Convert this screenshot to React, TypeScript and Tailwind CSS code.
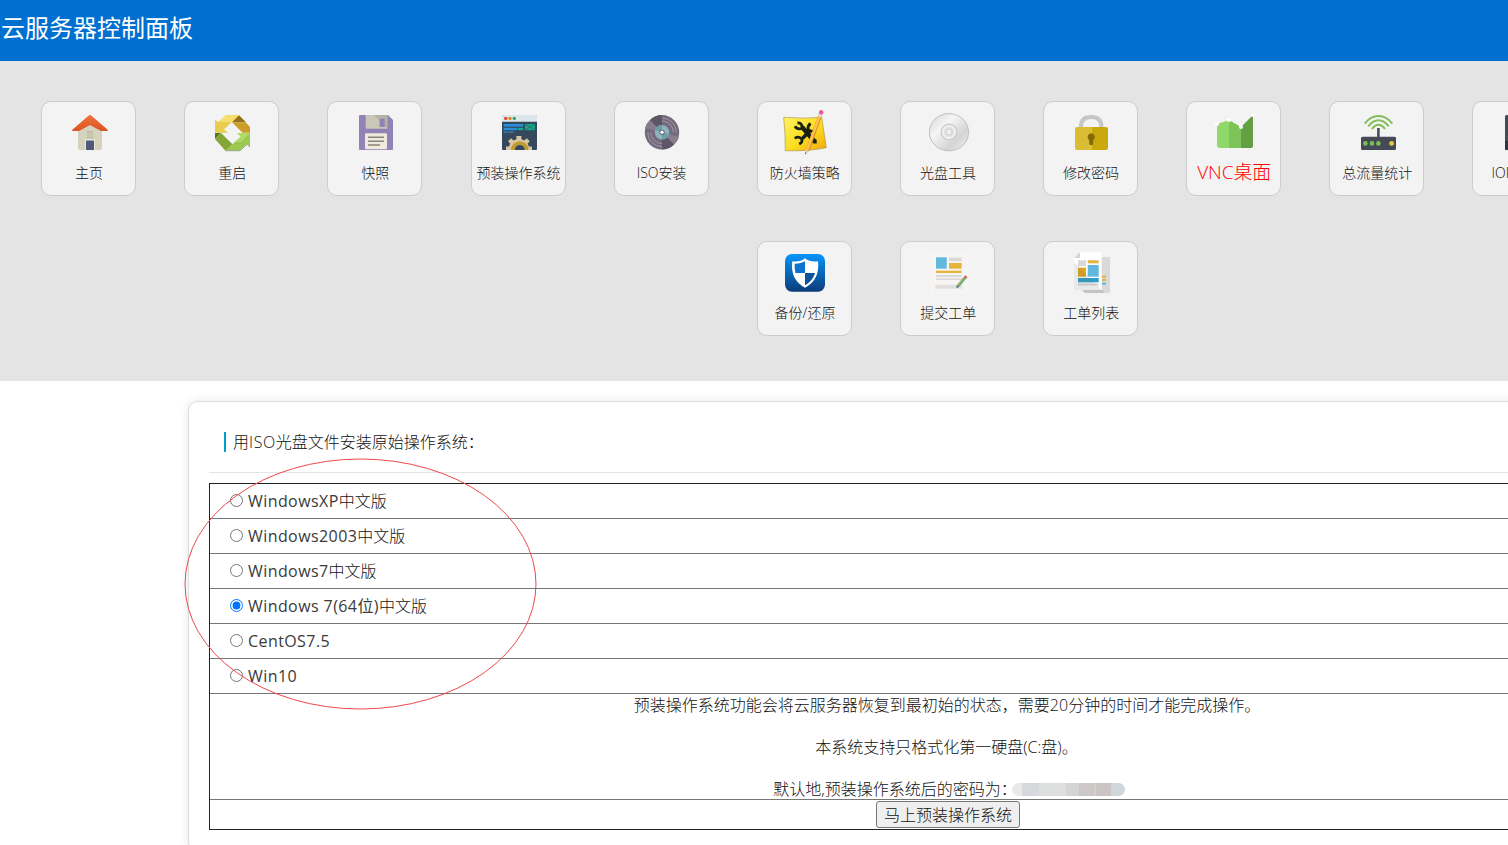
import React from 'react';

const HomeIcon = () => (
  <>
    <path d="M11 19 L23 9 L35 19 V38 Q35 40 33 40 H13 Q11 40 11 38 Z" fill="#d5d2bd" />
    <path d="M20 21.5h6M19 28h8" stroke="#bcb9a4" strokeWidth="1" />
    <rect x="20" y="22" width="6" height="5.5" fill="#c8c5b0" />
    <rect x="18" y="29" width="10" height="11" fill="#ece9da" />
    <rect x="19" y="30.5" width="8" height="9.5" fill="#4e5a78" />
    <path d="M5 20 L21.8 5.4 Q23 4.5 24.2 5.4 L41 20 Q41 21 40 21 H34 L23 15 L12 21 H6 Q5 21 5 20 Z" fill="url(#roof)" />
  </>
);

const RestartIcon = () => (
  <>
    <path d="M5 22.7V9.5L8.3 12.3 15.7 5.3H29L14 19.6 18.3 22.7Z" fill="#e9cd50" />
    <path d="M15.7 5.3H29L22 12H8.6Z" fill="#f6de68" />
    <path d="M29 5.3L36 12.3H22Z" fill="#977119" />
    <path d="M22 12.3H35.5L40 17V22.7H32.5Z" fill="#cb9c28" />
    <path d="M5 23H11L5 29Z" fill="#557a1d" />
    <path d="M5 29L11 23 22.5 34.3 15.7 41Z" fill="#83a637" />
    <path d="M40 23V36.5L37 33.7 30 40.3H15.7L31 26.5 27 23Z" fill="#9cc751" />
    <path d="M40 23L31 32H25L31 26.5 27 23Z" fill="#b0da66" />
    <path d="M15.7 40.7H30L37 34.3 40 37" stroke="#829267" strokeWidth=".8" fill="none" />
  </>
);

const SaveIcon = () => (
  <>
    <path d="M7 5H35L40 10V39Q40 40 39 40H7Q6 40 6 39V6Q6 5 7 5Z" fill="#9183b5" />
    <path d="M12.7 5H34.3V18.7H14Q12.7 18.7 12.7 17.4Z" fill="#c9c8b8" />
    <path d="M21 5H34.3V18.7Z" fill="#b5b3a2" />
    <path d="M26.5 9l5.2-.8V17h-5.2Z" fill="#9183b5" />
    <rect x="12" y="23.3" width="22" height="16" rx="1" fill="#eeeadd" />
    <path d="M15 27.3h16M15 31.3h16M15 35h12" stroke="#898477" strokeWidth="1.5" />
  </>
);

const SystemIcon = () => (
  <>
    <rect x="5" y="5" width="35" height="35" rx="1" fill="#34495e" />
    <path d="M6 5h33q1 0 1 1v5.7H5V6q0-1 1-1Z" fill="#dbe7ea" />
    <circle cx="8.7" cy="8.4" r="1.7" fill="#e0453b" />
    <circle cx="13" cy="8.4" r="1.7" fill="#df831f" />
    <circle cx="17.3" cy="8.4" r="1.7" fill="#2ba669" />
    <path d="M6.7 15.3h19.6" stroke="#288fdb" strokeWidth="2.6" />
    <path d="M6.7 19h13.6" stroke="#288fdb" strokeWidth="2.4" />
    <path d="M28 14h10v6.2H28Z" fill="#18a689" />
    <path d="M21 19h5.3" stroke="#18a689" strokeWidth="2.4" />
    <path d="M28 14l10 6M38 14l-10 6" stroke="#226b68" strokeWidth=".8" />
    <path d="M6.7 22.1h4.6M12 22.1h4.8" stroke="#3776a1" strokeWidth="1.6" />
    <path d="M9 40V36.4h3l1.2-2.8-2.2-2.3 3.1-3 2.3 2.2 3-1.3V26h5v3.2l3 1.3 2.3-2.2 3.1 3-2.2 2.3 1.2 2.8h3.1V40Z" fill="#d8c7a0" />
    <path d="M14 40a8.8 8.8 0 0 1 17.6 0h-3.8a5 5 0 0 0-10 0Z" fill="#c19b32" />
    <path d="M17.8 40a5 5 0 0 1 10 0Z" fill="#34495e" />
  </>
);

const DiscIcon = () => (
  <>
    <circle cx="22" cy="22.3" r="17.2" fill="#756a7b" />
    <path d="M22 22.3L5 18A17.2 17.2 0 0 1 10 10ZM22 22.3L34 34.6A17.2 17.2 0 0 0 39 27Z" fill="#877d8d" />
    <path d="M22 22.3V5.1A17.2 17.2 0 0 0 10 10ZM22 22.3V39.5A17.2 17.2 0 0 0 34 34.6Z" fill="#5e5566" />
    <path d="M22 8a14.3 14.3 0 0 1 14.3 14.3M22 11a11.3 11.3 0 0 1 11.3 11.3M7.7 22.3A14.3 14.3 0 0 0 22 36.6M10.7 22.3A11.3 11.3 0 0 0 22 33.6" stroke="#aaa1ad" strokeWidth=".8" fill="none" />
    <circle cx="22" cy="22.3" r="7.2" fill="#8bb4bb" />
    <path d="M22 22.3L15 20A7.2 7.2 0 0 1 22 15.1ZM22 22.3L29 24A7.2 7.2 0 0 1 22 29.5Z" fill="#6f9ca5" />
    <circle cx="22" cy="22.3" r="2.5" fill="#5d5566" />
    <circle cx="22" cy="22.3" r="1.7" fill="#fff" />
  </>
);

const FirewallIcon = () => (
  <>
    <path d="M.7 7.3Q20 9 38.7 7.3L43.3 37.7Q24 41.5 2.3 40.7 2.5 24 .7 7.3Z" fill="url(#note)" stroke="#aa9950" strokeWidth=".7" />
    <g stroke="#172014" fill="none">
      <path d="M19 17L31.5 31.5" strokeWidth="4.4" />
      <path d="M19.5 28.5L27 20.5" strokeWidth="3.6" />
      <path d="M14.5 13Q19.5 12.3 19 18.5 14 19.8 12 16.3" strokeWidth="2.8" />
      <path d="M11.8 28.5Q14.8 25.6 18.5 28.8 20.3 32 16.2 34" strokeWidth="2.8" />
      <path d="M27.6 13.5Q24.2 16 25.2 19.5 27.8 22.4 31 20.8" strokeWidth="2.8" />
      <path d="M31.8 29.5L32 33.5" strokeWidth="3.6" />
    </g>
    <path d="M38 3L24.5 40.5" stroke="#d98f25" strokeWidth="3.8" />
    <path d="M37.6 3L24 40.5" stroke="#ffc14c" strokeWidth="2.6" />
    <path d="M22.4 44L22.4 39.5 26 41Z" fill="#e6c698" />
    <path d="M22.2 44.5l.1-2 1.2.5Z" fill="#333" />
    <path d="M37 6.5l1-3" stroke="#d8dce0" strokeWidth="4.4" />
    <circle cx="38.2" cy="2.2" r="2.2" fill="#ef55a0" />
  </>
);

const CdIcon = () => (
  <>
    <ellipse cx="23" cy="22.2" rx="19.6" ry="18.6" fill="url(#cd)" stroke="#b9b9b9" strokeWidth=".9" />
    <circle cx="23" cy="22" r="8" fill="#e4e4e4" stroke="#bdbdbd" strokeWidth=".8" />
    <circle cx="23" cy="22" r="6" fill="none" stroke="#f8f8f8" strokeWidth="1" />
    <circle cx="23" cy="22" r="3.2" fill="#eee" stroke="#c3c3c3" strokeWidth=".8" />
  </>
);

const LockIcon = () => (
  <>
    <path d="M12 19V16.5Q12 7 22.2 7T32.4 16.5V19" fill="none" stroke="#c6c6c6" strokeWidth="4" />
    <path d="M8 17H22.5V40H8Q6 40 6 38V19Q6 17 8 17Z" fill="#d8bd35" />
    <path d="M22.5 17H37Q39 17 39 19V38Q39 40 37 40H22.5Z" fill="#c9a90d" />
    <path d="M22.2 23.2a4 4 0 0 1 2 7.2V33.2a2 2 0 0 1-4 0V30.4a4 4 0 0 1 2-7.2Z" fill="#826b06" />
  </>
);

const ChartIcon = () => (
  <>
    <path d="M5 14L17 10V38H8Q5 38 5 35Z" fill="#91d86a" />
    <path d="M17 10L29 17V38H17Z" fill="#7cc358" />
    <path d="M29 17L41 5V36Q41 38 38 38H29Z" fill="#64a043" />
    <circle cx="5" cy="14" r="2" fill="#fff" />
    <circle cx="17" cy="10" r="2" fill="#fff" />
    <circle cx="29" cy="17" r="2" fill="#fff" />
    <circle cx="41" cy="5" r="2" fill="#fff" />
  </>
);

const RouterIcon = () => (
  <>
    <path d="M9.7 13.6Q15.5 6 23.5 6T37.3 13.6M13.3 16.4Q18 10.3 23.5 10.3T33.7 16.4M17 19Q20 14.8 23.5 14.8T30 19" fill="none" stroke="#82bd56" strokeWidth="1.9" />
    <path d="M23.4 18v9" stroke="#474c59" strokeWidth="2.6" />
    <rect x="6" y="26.7" width="35" height="13.3" rx="1.5" fill="#454a57" />
    <circle cx="10.4" cy="33.4" r="2.3" fill="#7dbd55" />
    <circle cx="16.9" cy="33.4" r="2.3" fill="#7dbd55" />
    <circle cx="23.4" cy="33.4" r="2.3" fill="#7dbd55" />
    <circle cx="36.6" cy="33.4" r="2.4" fill="#eec541" />
  </>
);

const ServerIcon = () => (
  <>
    <rect x="7" y="5" width="32" height="35" rx="1.5" fill="#454a57" />
    <path d="M7 31h32v7.5q0 1.5-1.5 1.5h-29Q7 40 7 38.5Z" fill="#2d323e" />
    <circle cx="23" cy="18" r="8" fill="#d8dce0" />
  </>
);

const ShieldIcon = () => (
  <>
    <rect x="2" y="4" width="40" height="37.7" rx="7" fill="url(#shieldbg)" />
    <path d="M22 8.3Q27 12.3 35 11.3 37 30 22 37.7 7 30 9.3 11.3 17 12.3 22 8.3Z" fill="#fff" />
    <path d="M22 11.2V23H12.5Q11.2 18.6 11.7 13.6 17.5 14 22 11.2Z" fill="#0b72cf" />
    <path d="M22 23H32Q29.8 31 22 35.2Z" fill="#0c529d" />
  </>
);

const TicketIcon = () => (
  <>
    <rect x="4" y="2" width="38" height="42" fill="#f6f5f4" />
    <rect x="10" y="7.3" width="10.7" height="11.4" fill="#60b9dc" />
    <rect x="23" y="7.7" width="12.7" height="3.4" fill="#d9d8d6" />
    <rect x="23" y="13" width="12.7" height="5.7" fill="#e8b33d" />
    <rect x="10" y="20.7" width="25.7" height="2.3" fill="#e8b33d" />
    <path d="M10 26h25.7M10 29.2h25.7" stroke="#dad9d7" strokeWidth="1.8" />
    <rect x="9.3" y="34.7" width="27" height="4" fill="#e2e0de" />
    <path d="M38.7 28L32 36" stroke="#68ad80" strokeWidth="3" />
    <path d="M38.2 27.3L31.2 35.4" stroke="#e1b94a" strokeWidth="1" />
    <path d="M40.3 26.3L38.8 28" stroke="#d95951" strokeWidth="3" />
    <path d="M30.3 38.2L30.8 35 33.2 37Z" fill="#586890" />
  </>
);

const TicketListIcon = () => (
  <>
    <path d="M13 7H41V43H16L13 40Z" fill="#d9d9d9" />
    <path d="M13 40H33L36 43H16Z" fill="#c3c3c3" />
    <path d="M33 26.7h4M33 30h4" stroke="#e8b33d" strokeWidth="2" />
    <path d="M33 33.7h4" stroke="#60b9dc" strokeWidth="2" />
    <path d="M11 2.3H32.7V40H5V8Z" fill="#fff" />
    <path d="M5 8L11 2.3V8Z" fill="#d4d4d4" />
    <rect x="9" y="10.3" width="8" height="6" fill="#d9d9d9" />
    <rect x="18.7" y="10.3" width="11" height="3" fill="#e8b33d" />
    <rect x="9" y="17.7" width="8" height="9" fill="#dda51c" />
    <rect x="18.7" y="15" width="11" height="11.7" fill="#60b9dc" />
    <rect x="9" y="28" width="20.7" height="4.3" fill="#2a9ec8" />
    <path d="M9 34.5h20.7" stroke="#d9d9d9" strokeWidth="2" />
    <path d="M5 12L32.7 40H5Z" fill="#777" opacity=".16" />
  </>
);

type Tile = { label: React.ReactNode; icon: () => React.JSX.Element; big?: boolean };

const firstRow: Tile[] = [
  { label: '主页', icon: HomeIcon },
  { label: '重启', icon: RestartIcon },
  { label: '快照', icon: SaveIcon },
  { label: '预装操作系统', icon: SystemIcon },
  { label: 'ISO安装', icon: DiscIcon },
  { label: '防火墙策略', icon: FirewallIcon },
  { label: '光盘工具', icon: CdIcon },
  { label: '修改密码', icon: LockIcon },
  { label: 'VNC桌面', icon: ChartIcon, big: true },
  { label: '总流量统计', icon: RouterIcon },
  { label: 'IOPS统计', icon: ServerIcon },
];

const secondRow: Tile[] = [
  { label: '备份/还原', icon: ShieldIcon },
  { label: '提交工单', icon: TicketIcon },
  { label: '工单列表', icon: TicketListIcon },
];

function TileButton({ label, icon: Icon, big }: Tile) {
  return (
    <div className="w-[143.15px] shrink-0">
      <a className="flex h-[95px] w-[95px] flex-col items-center rounded-[10px] border border-[#ccc] bg-[#f3f3f3] pt-2 pl-[3px]">
        <svg className="h-[46px] w-[46px] shrink-0" viewBox="0 0 46 46"><Icon /></svg>
        <span className={big
          ? 'mt-1 mr-0.5 text-[18.9px] leading-6 whitespace-nowrap text-[#f00]'
          : 'mt-[5px] mr-0.5 text-sm leading-6 whitespace-nowrap text-[#111]'}>{label}</span>
      </a>
    </div>
  );
}

const systems = [
  { latin: 'WindowsXP', rest: '中文版' },
  { latin: 'Windows2003', rest: '中文版' },
  { latin: 'Windows7', rest: '中文版' },
  { latin: 'Windows 7(64位)', rest: '中文版', checked: true },
  { latin: 'CentOS7.5', rest: '' },
  { latin: 'Win10', rest: '' },
];

export default function App() {
  return (
    <div className="relative h-[845px] w-full overflow-hidden bg-white font-['Open_Sans','Noto_Sans_CJK_SC',sans-serif] text-base text-[#111]">
      <svg className="absolute h-0 w-0">
        <defs>
          <linearGradient id="roof" x1="0" y1="0" x2="0" y2="1"><stop offset="0" stopColor="#f2703c" /><stop offset="1" stopColor="#d95524" /></linearGradient>
          <linearGradient id="note" x1="0" y1="0" x2="1" y2="1"><stop offset="0" stopColor="#fff35c" /><stop offset=".55" stopColor="#fbdc20" /><stop offset="1" stopColor="#f2a50c" /></linearGradient>
          <linearGradient id="cd" x1="0" y1="0" x2="1" y2="1"><stop offset="0" stopColor="#d6d6d6" /><stop offset=".35" stopColor="#f5f5f5" /><stop offset=".7" stopColor="#d4d4d4" /><stop offset="1" stopColor="#f3f3f3" /></linearGradient>
          <linearGradient id="shieldbg" x1="0" y1="0" x2="0" y2="1"><stop offset="0" stopColor="#0694fb" /><stop offset="1" stopColor="#0c3c78" /></linearGradient>
        </defs>
      </svg>

      <header className="h-[61px] bg-[#0070d0] pt-[9px] pl-px">
        <h1 className="font-['Noto_Sans_CJK_SC',sans-serif] text-2xl leading-9 font-normal text-white">云服务器控制面板</h1>
      </header>

      <nav className="h-80 overflow-hidden bg-[#e4e4e4] pt-10 font-light">
        <div className="flex h-[140px] pl-[41.08px]">
          {firstRow.map((t, i) => <TileButton key={i} {...t} />)}
        </div>
        <div className="flex pl-[757px]">
          {secondRow.map((t, i) => <TileButton key={i} {...t} />)}
        </div>
      </nav>

      <main className="mt-5 ml-[188px] h-[450px] w-[1520px] rounded-[10px] border border-[#ddd] bg-white px-5 shadow-[0_0_10px_rgba(0,0,0,0.1)]">
        <div className="flex h-[71px] items-center border-b border-[#e5e5e5] pt-2.5 pl-[15px]">
          <h2 className="flex h-5 items-center border-l-2 border-[#00a0c6] pl-[7px] text-base font-light"><span>用<span className="tracking-[0.6px]">ISO</span>光盘文件安装原始操作系统：</span></h2>
        </div>
        <form className="mt-2.5 w-[1478px] border border-[#222]">
          {systems.map((s) => (
            <label key={s.latin} className="flex h-[35px] items-center border-b border-[#777] pl-5">
              <input type="radio" name="os" defaultChecked={s.checked} className="m-0 mb-0.5 h-[13px] w-[13px]" />
              <span className="ml-[5px] leading-6 whitespace-pre"><span className="tracking-[0.42px] text-[#3a3a3a]">{s.latin}</span><span className="font-light">{s.rest}</span></span>
            </label>
          ))}
          <div className="flex h-[106px] flex-col items-center border-b border-[#777] pt-px leading-[21px] font-light">
            <p className="mr-0.5">预装操作系统功能会将云服务器恢复到最初始的状态，需要20分钟的时间才能完成操作。</p>
            <p className="mt-[21px] mr-[3px]">本系统支持只格式化第一硬盘(C:盘)。</p>
            <p className="mt-[21px] ml-0.5 flex items-center">
              <span>默认地,预装操作系统后的密码为：</span>
              <span className="-ml-[5px] flex h-[13px] w-[113px] overflow-hidden rounded-full">
                <i className="w-2.5 bg-[#e9e9ea]" /><i className="w-[17px] bg-[#d6d8dc]" /><i className="w-[27px] bg-[#dddede]" /><i className="w-[13px] bg-[#d3d4d3]" /><i className="w-[15px] bg-[#ccc8c8]" /><i className="w-[2px] bg-[#d2cfcf]" /><i className="w-[15px] bg-[#cbc4c4]" /><i className="flex-1 bg-[#d0d6da]" />
              </span>
            </p>
          </div>
          <div className="flex h-[29px] items-start justify-center pt-px">
            <button type="button" className="h-[27px] w-36 rounded-[3px] border border-[#767676] bg-[#efefef] leading-6 font-light whitespace-nowrap">马上预装操作系统</button>
          </div>
        </form>
      </main>

      <svg className="pointer-events-none absolute top-[458px] left-[184px] h-[252px] w-[353px]" viewBox="0 0 353 252">
        <ellipse cx="176.5" cy="126" rx="175.5" ry="125" fill="none" stroke="#f0484c" strokeWidth="1" />
      </svg>
    </div>
  );
}
